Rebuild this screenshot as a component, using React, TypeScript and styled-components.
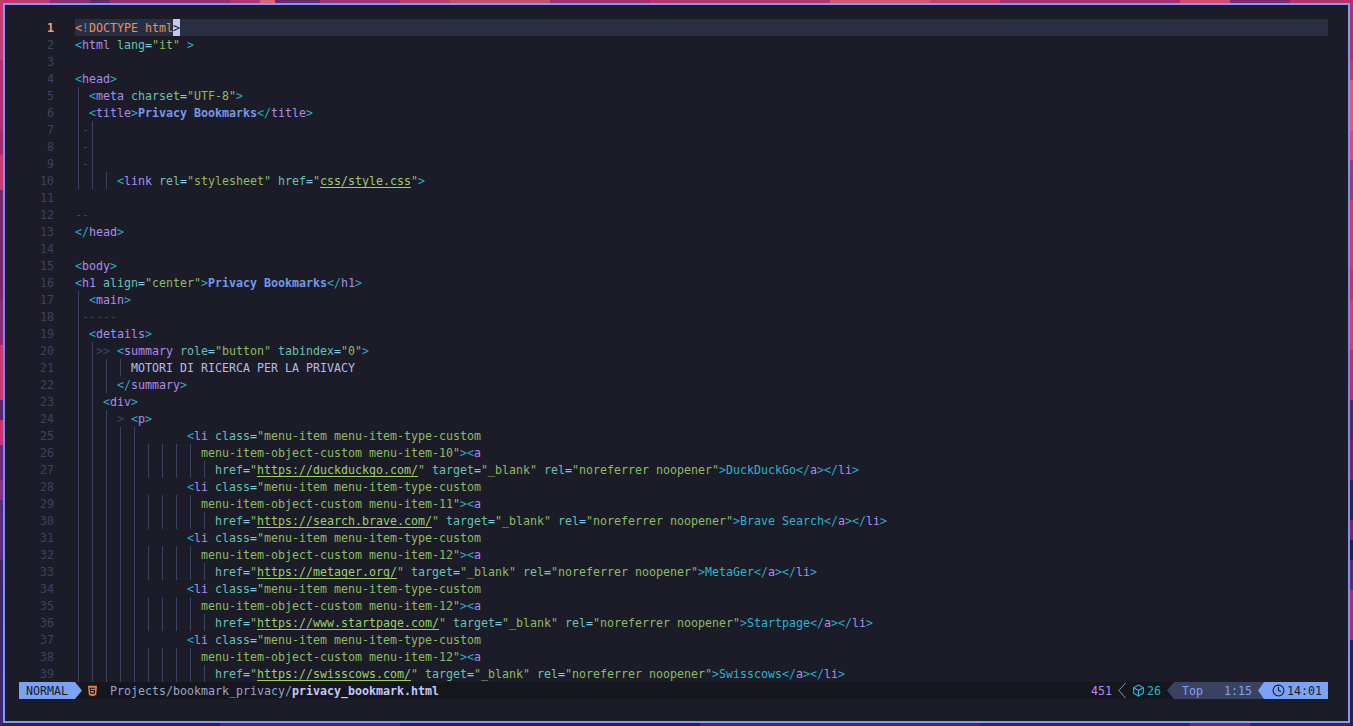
import React from "react";
import styled, { createGlobalStyle } from "styled-components";
import { Box, Clock } from "lucide-react";
import { FaHtml5 } from "react-icons/fa";

const MONO = `"DejaVu Sans Mono", "Liberation Mono", monospace`;

const stripes = (dir: string, stops: [number, string][], total: number) => {
  const parts: string[] = [];
  stops.forEach(([end, c], i) => {
    const start = i === 0 ? 0 : stops[i - 1][0];
    parts.push(`${c} ${start}px ${end}px`);
  });
  return `linear-gradient(${dir}, ${parts.join(", ")}, ${stops[stops.length - 1][1]} ${total}px)`;
};

const leftEdge = stripes("180deg", [[60, "#c83b6f"], [130, "#b02f75"], [155, "#a32b70"], [190, "#cc3a70"], [300, "#7d2570"], [345, "#8b2a75"], [400, "#c83a72"], [420, "#5a2570"], [445, "#c9336f"], [480, "#6a2a80"], [500, "#8a3085"], [560, "#5b2a85"], [640, "#40256a"], [726, "#3d2570"]], 726);
const rightEdge = stripes("180deg", [[60, "#b42f70"], [80, "#c8366f"], [130, "#e85575"], [160, "#d84a78"], [200, "#9a3a7a"], [270, "#d03a72"], [300, "#c03270"], [350, "#d04070"], [400, "#b8306f"], [440, "#5a2260"], [480, "#7a2268"], [520, "#3a1c50"], [540, "#7a2570"], [560, "#2e1a4a"], [590, "#5a2a78"], [640, "#a03278"], [726, "#2f1c50"]], 726);
const topEdge = stripes("90deg", [[50, "#c0386f"], [90, "#8a2f75"], [110, "#5f2a6e"], [230, "#93307a"], [260, "#b03575"], [275, "#e0607a"], [320, "#6a2a70"], [400, "#9a3378"], [450, "#b8406f"], [550, "#c04f70"], [650, "#a03072"], [830, "#b8336f"], [930, "#d05a72"], [1000, "#c83f70"], [1180, "#a52f70"], [1230, "#d8486f"], [1290, "#7f2a70"], [1353, "#b8306c"]], 1353);
const bottomEdge = stripes("90deg", [[220, "#2c1f48"], [400, "#4a2560"], [700, "#2a1f45"], [980, "#4f2555"], [1190, "#3a2350"], [1250, "#6d2b65"], [1353, "#3a2350"]], 1353);

const GlobalStyle = createGlobalStyle`
  html, body { margin: 0; padding: 0; height: 100%; overflow: hidden; background: #2c1f48; }
`;

const Desktop = styled.div`
  width: 1353px;
  height: 726px;
  box-sizing: border-box;
  padding: 3px;
  background:
    ${leftEdge} 0 0 / 3px 100% no-repeat,
    ${rightEdge} 100% 0 / 3px 100% no-repeat,
    ${topEdge} 0 0 / 100% 3px no-repeat,
    ${bottomEdge} 0 100% / 100% 3px no-repeat,
    #2c1f48;
`;

const Terminal = styled.div`
  height: 100%;
  box-sizing: border-box;
  border: 2px solid #7a9bf0;
  border-image: linear-gradient(180deg, #7a9ef5, #7b86e6 50%, #7a9ef5) 1;
  background: #1b1c27;
  padding: 14px 20px 22px 14px;
  display: flex;
  flex-direction: column;
  font-family: ${MONO};
  font-size: 11.63px;
  line-height: 19px;
  color: #c0caf5;
  white-space: pre;
`;

const Code = styled.div`
  height: 663px;
  overflow: hidden;
  display: flex;
  flex-direction: column;
`;

const Row = styled.div`
  display: flex;
  height: 17px;
  flex: none;
`;

const LineNumber = styled.span<{ $current?: boolean }>`
  width: 35px;
  margin-right: 21px;
  flex: none;
  text-align: right;
  color: ${(p) => (p.$current ? "#ff9e64" : "#3b4261")};
  font-weight: ${(p) => (p.$current ? 700 : 400)};
`;

const LineText = styled.div<{ $current?: boolean }>`
  flex: 1;
  min-width: 0;
  background: ${(p) => (p.$current ? "#292e42" : "transparent")};
`;

const Guide = styled.span`
  display: inline-block;
  width: 7px;
  height: 17px;
  vertical-align: top;
  background: linear-gradient(#3b4261, #3b4261) 3px 0 / 1px 100% no-repeat;
`;

const Dim = styled.span`
  color: #3b4261;
`;

type Kind = "delim" | "tag" | "attr" | "eq" | "str" | "url" | "text" | "title" | "link" | "doctype" | "bang";

const KIND_COLOR: Record<Kind, string> = {
  delim: "#2aa9c6",
  tag: "#ad8bee",
  attr: "#68c2b2",
  eq: "#7fcde6",
  str: "#8fbb60",
  url: "#9ece6a",
  text: "#b4bde8",
  title: "#7299ec",
  link: "#2ab4ce",
  doctype: "#e8925c",
  bang: "#2aa9c6",
};

const Token = styled.span<{ $kind: Kind }>`
  color: ${(p) => KIND_COLOR[p.$kind]};
  font-weight: ${(p) => (p.$kind === "title" ? 700 : 400)};
  ${(p) => (p.$kind === "url" ? "text-decoration: underline; text-underline-offset: 2px; text-decoration-color: #9ece6a;" : "")}
`;

const Cursor = styled.span`
  display: inline-block;
  height: 17px;
  vertical-align: top;
  background: #c0caf5;
  color: #1a1b26;
`;

type Tok = { k: Kind; t: string };

function tokenize(code: string, startInString: boolean): Tok[] {
  const out: Tok[] = [];
  let i = 0;
  const startsInTag = code.startsWith("href");
  let state: "text" | "tag" | "str" = startInString ? "str" : startsInTag ? "tag" : "text";
  let openTag = startsInTag ? "a" : "";
  let attr = "";
  while (i < code.length) {
    if (state === "text") {
      if (code[i] === "<") {
        const close = code[i + 1] === "/";
        const d = close ? "</" : "<";
        out.push({ k: "delim", t: d });
        i += d.length;
        const m = /^[\w]+/.exec(code.slice(i));
        if (m) {
          out.push({ k: "tag", t: m[0] });
          i += m[0].length;
          openTag = close ? "" : m[0];
        }
        state = "tag";
      } else {
        let j = code.indexOf("<", i);
        if (j < 0) j = code.length;
        const k: Kind = openTag === "title" || openTag === "h1" ? "title" : openTag === "a" ? "link" : "text";
        out.push({ k, t: code.slice(i, j) });
        i = j;
      }
    } else if (state === "tag") {
      const c = code[i];
      if (c === " ") {
        out.push({ k: "text", t: " " });
        i += 1;
      } else if (c === ">") {
        out.push({ k: "delim", t: ">" });
        i += 1;
        state = "text";
      } else if (c === "=") {
        out.push({ k: "eq", t: "=" });
        i += 1;
      } else if (c === '"') {
        out.push({ k: "str", t: '"' });
        i += 1;
        state = "str";
      } else {
        const m = /^[\w-]+/.exec(code.slice(i));
        const word = m ? m[0] : c;
        attr = word;
        out.push({ k: "attr", t: word });
        i += word.length;
      }
    } else {
      let j = code.indexOf('"', i);
      const closed = j >= 0;
      if (!closed) j = code.length;
      if (j > i) out.push({ k: attr === "href" ? "url" : "str", t: code.slice(i, j) });
      i = j;
      if (closed) {
        out.push({ k: "str", t: '"' });
        i += 1;
        state = "tag";
      }
    }
  }
  return out;
}

type Line = { pre?: string; code?: string; inStr?: boolean };

const G9 = "│ │ │ │ │ │ │ │ │ ";
const G10 = G9 + "│ ";
const LI = "│ │ │ │ │       ";

const item = (n: string, url: string, name: string): Line[] => [
  { pre: LI, code: '<li class="menu-item menu-item-type-custom' },
  { pre: G9, code: `menu-item-object-custom menu-item-${n}"><a`, inStr: true },
  { pre: G10, code: `href="${url}" target="_blank" rel="noreferrer noopener">${name}</a></li>` },
];

const LINES: Line[] = [
  {},
  { code: '<html lang="it" >' },
  {},
  { code: "<head>" },
  { pre: "│ ", code: '<meta charset="UTF-8">' },
  { pre: "│ ", code: "<title>Privacy Bookmarks</title>" },
  { pre: "│-│" },
  { pre: "│-│" },
  { pre: "│-│" },
  { pre: "│ │ │ ", code: '<link rel="stylesheet" href="css/style.css">' },
  {},
  { pre: "--" },
  { code: "</head>" },
  {},
  { code: "<body>" },
  { code: '<h1 align="center">Privacy Bookmarks</h1>' },
  { pre: "│ ", code: "<main>" },
  { pre: "│-----" },
  { pre: "│ ", code: "<details>" },
  { pre: "│ │>> ", code: '<summary role="button" tabindex="0">' },
  { pre: "│ │ │ │ ", code: "MOTORI DI RICERCA PER LA PRIVACY" },
  { pre: "│ │ │ ", code: "</summary>" },
  { pre: "│ │ ", code: "<div>" },
  { pre: "│ │ │ > ", code: "<p>" },
  ...item("10", "https://duckduckgo.com/", "DuckDuckGo"),
  ...item("11", "https://search.brave.com/", "Brave Search"),
  ...item("12", "https://metager.org/", "MetaGer"),
  ...item("12", "https://www.startpage.com/", "Startpage"),
  ...item("12", "https://swisscows.com/", "Swisscows"),
];

const Prefix: React.FC<{ text: string }> = ({ text }) => (
  <>
    {text.split("").map((c, i) =>
      c === "│" ? <Guide key={i} /> : <Dim key={i}>{c}</Dim>
    )}
  </>
);

const StatusBar = styled.div`
  height: 17px;
  flex: none;
  display: flex;
  align-items: stretch;
  background: #16161e;
  color: #a9b1d6;
`;

const Mode = styled.span`
  width: 63px;
  box-sizing: border-box;
  padding-left: 7px;
  background: #7aa2f7;
  color: #1a1b26;
  clip-path: polygon(0 0, 56px 0, 100% 50%, 56px 100%, 0 100%);
`;

const FileIcon = styled.span`
  width: 9px;
  margin: 0 13px 0 6px;
  display: flex;
  align-items: center;
  color: #e8803f;
`;

const FilePath = styled.span`
  color: #9aa3c9;
`;

const FileName = styled.b`
  color: #c0caf5;
  font-weight: 700;
`;

const RightGroup = styled.div`
  margin-left: auto;
  display: flex;
  align-items: stretch;
`;

const Size = styled.span`
  color: #b08fe8;
  margin-right: 6px;
`;

const Chevron = styled.svg`
  width: 8px;
  height: 17px;
  margin-right: 6px;
  color: #a9b1d6;
`;

const Diag = styled.span`
  display: flex;
  align-items: flex-start;
  gap: 2px;
  color: #2ab4ce;
  margin-right: 6px;
  & > svg {
    align-self: center;
  }
`;

const Position = styled.span`
  display: flex;
  gap: 21px;
  padding: 0 12px 0 15px;
  background: #3b4261;
  color: #7aa2f7;
  clip-path: polygon(7px 0, 100% 0, 100% 100%, 7px 100%, 0 50%);
`;

const ClockBlock = styled.span`
  display: flex;
  align-items: flex-start;
  gap: 2px;
  margin-left: -6px;
  padding: 0 6px 0 14px;
  background: #7aa2f7;
  color: #1a1b26;
  clip-path: polygon(6px 0, 100% 0, 100% 100%, 6px 100%, 0 50%);
  & > svg {
    align-self: center;
  }
`;

export default function App() {
  return (
    <Desktop>
      <GlobalStyle />
      <Terminal>
        <Code>
          {LINES.map((line, i) => (
            <Row key={i}>
              <LineNumber $current={i === 0}>{i + 1}</LineNumber>
              <LineText $current={i === 0}>
                {i === 0 ? (
                  <>
                    <Token $kind="doctype">{"<"}</Token>
                    <Token $kind="bang">!</Token>
                    <Token $kind="doctype">DOCTYPE html</Token>
                    <Cursor>{">"}</Cursor>
                  </>
                ) : (
                  <>
                    {line.pre && <Prefix text={line.pre} />}
                    {line.code &&
                      tokenize(line.code, !!line.inStr).map((t, j) => (
                        <Token key={j} $kind={t.k}>{t.t}</Token>
                      ))}
                  </>
                )}
              </LineText>
            </Row>
          ))}
        </Code>
        <StatusBar>
          <Mode>NORMAL</Mode>
          <FileIcon><FaHtml5 size={12} /></FileIcon>
          <FilePath>Projects/bookmark_privacy/<FileName>privacy_bookmark.html</FileName></FilePath>
          <RightGroup>
            <Size>451</Size>
            <Chevron viewBox="0 0 8 17" fill="none" stroke="currentColor" strokeWidth="0.8">
              <path d="M7.5 1 L0.8 8.5 L7.5 16" />
            </Chevron>
            <Diag><Box size={13} strokeWidth={2.2} />26</Diag>
            <Position><span>Top</span><span>1:15</span></Position>
            <ClockBlock><Clock size={13} strokeWidth={2} />14:01</ClockBlock>
          </RightGroup>
        </StatusBar>
      </Terminal>
    </Desktop>
  );
}
